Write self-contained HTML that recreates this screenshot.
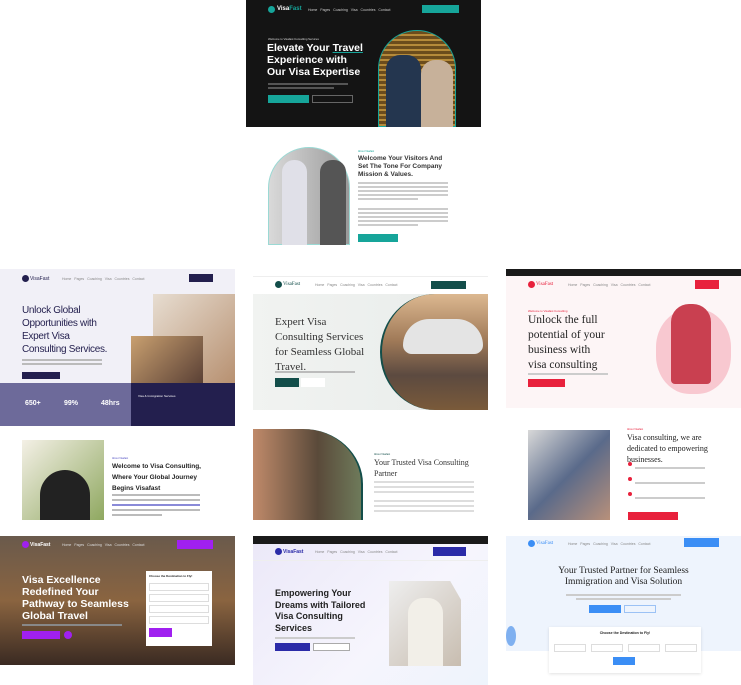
<!DOCTYPE html>
<html><head><meta charset="utf-8"><style>
*{margin:0;padding:0;box-sizing:border-box}
body{width:741px;height:685px;background:#fff;position:relative;overflow:hidden;font-family:"Liberation Sans",sans-serif}
.a{position:absolute}
.t{position:absolute;white-space:nowrap}
.serif{font-family:"Liberation Serif",serif}
.ln{position:absolute;height:1.5px;background:#bbb}
.nav{position:absolute;font-size:3.5px;color:#888;white-space:nowrap}
</style></head><body>

<!-- TOP DARK HERO -->
<div class="a" style="left:246px;top:0;width:235px;height:127px;background:#141414">
  <div class="a" style="left:22px;top:6px;width:7px;height:7px;border-radius:50%;background:#16a59a"></div>
  <div class="a" style="left:31px;top:6px;font-size:6px;font-weight:bold;color:#fff">Visa<span style="color:#16a59a">Fast</span></div>
  <div class="nav" style="left:62px;top:8px;color:#ccc">Home &nbsp; Pages &nbsp; Coaching &nbsp; Visa &nbsp; Countries &nbsp; Contact</div>
  <div class="a" style="left:176px;top:5px;width:37px;height:8px;background:#16a59a"></div>
  <div class="t" style="left:22px;top:37px;font-size:2.8px;color:#ddd">Welcome to Visafast Consulting Services</div>
  <div class="t" style="left:21px;top:42px;font-size:10.5px;font-weight:bold;color:#fff;line-height:12px">Elevate Your <u style="text-decoration-color:#16a59a">Travel</u><br>Experience with<br>Our Visa Expertise</div>
  <div class="ln" style="left:22px;top:83px;width:80px;background:#555"></div>
  <div class="ln" style="left:22px;top:87px;width:66px;background:#555"></div>
  <div class="a" style="left:22px;top:95px;width:41px;height:8px;background:#16a59a"></div>
  <div class="a" style="left:66px;top:95px;width:41px;height:8px;border:1px solid #666"></div>
  <div class="a" style="left:132px;top:30px;width:78px;height:97px;border-radius:39px 39px 0 0;border:1.5px solid #16a59a;background:repeating-linear-gradient(#6b4c1c 0 3px,#b58a3a 3px 5px)"></div>
  <div class="a" style="left:140px;top:55px;width:35px;height:72px;border-radius:14px 14px 0 0;background:#24364f"></div>
  <div class="a" style="left:175px;top:60px;width:32px;height:67px;border-radius:14px 14px 0 0;background:#c7b19a"></div>
</div>

<!-- ABOUT BLOCK -->
<div class="a" style="left:268px;top:147px;width:82px;height:98px;border-radius:41px 41px 0 0;border:1px solid #9bd9d4;background:linear-gradient(90deg,#d9d9d9,#9a9a9a)"></div>
<div class="a" style="left:282px;top:160px;width:25px;height:85px;border-radius:12px 12px 0 0;background:#e0e0e8"></div>
<div class="a" style="left:320px;top:160px;width:26px;height:85px;border-radius:12px 12px 0 0;background:#555"></div>
<div class="t" style="left:358px;top:150px;font-size:2.5px;color:#16a59a">About Visafast</div>
<div class="t" style="left:358px;top:155px;font-size:6.5px;font-weight:bold;color:#333;line-height:8px">Welcome Your Visitors And<br>Set The Tone For Company<br>Mission &amp; Values.</div>
<div class="ln" style="left:358px;top:182px;width:90px;background:#ccc"></div>
<div class="ln" style="left:358px;top:186px;width:90px;background:#ccc"></div>
<div class="ln" style="left:358px;top:190px;width:90px;background:#ccc"></div>
<div class="ln" style="left:358px;top:194px;width:90px;background:#ccc"></div>
<div class="ln" style="left:358px;top:198px;width:60px;background:#ccc"></div>
<div class="ln" style="left:358px;top:208px;width:90px;background:#ccc"></div>
<div class="ln" style="left:358px;top:212px;width:90px;background:#ccc"></div>
<div class="ln" style="left:358px;top:216px;width:90px;background:#ccc"></div>
<div class="ln" style="left:358px;top:220px;width:90px;background:#ccc"></div>
<div class="ln" style="left:358px;top:224px;width:60px;background:#ccc"></div>
<div class="a" style="left:358px;top:234px;width:40px;height:8px;background:#16a59a"></div>

<!-- ROW3 CARD1 -->
<div class="a" style="left:0;top:269px;width:235px;height:157px;background:#f1f0f7">
  <div class="a" style="left:22px;top:6px;width:7px;height:7px;border-radius:50%;background:#231f4e"></div>
  <div class="t" style="left:30px;top:7px;font-size:5px;color:#231f4e">VisaFast</div>
  <div class="nav" style="left:62px;top:8px">Home &nbsp; Pages &nbsp; Coaching &nbsp; Visa &nbsp; Countries &nbsp; Contact</div>
  <div class="a" style="left:189px;top:5px;width:24px;height:8px;background:#231f4e"></div>
  <div class="t" style="left:22px;top:35px;font-size:10px;color:#231f4e;line-height:13px;letter-spacing:-0.3px">Unlock Global<br>Opportunities with<br>Expert Visa<br>Consulting Services.</div>
  <div class="ln" style="left:22px;top:90px;width:80px;background:#bbb"></div>
  <div class="ln" style="left:22px;top:94px;width:80px;background:#bbb"></div>
  <div class="a" style="left:22px;top:103px;width:38px;height:7px;background:#231f4e"></div>
  <div class="a" style="left:153px;top:25px;width:82px;height:90px;background:linear-gradient(135deg,#e7ddd1,#b79070)"></div>
  <div class="a" style="left:131px;top:67px;width:72px;height:47px;background:linear-gradient(135deg,#c9a070,#5a4035)"></div>
  <div class="a" style="left:0;top:114px;width:131px;height:43px;background:#6d6a9a"></div>
  <div class="a" style="left:131px;top:114px;width:104px;height:43px;background:#231f4e"></div>
  <div class="t" style="left:25px;top:131px;font-size:7px;color:#fff;font-weight:bold">650+</div>
  <div class="t" style="left:64px;top:131px;font-size:7px;color:#fff;font-weight:bold">99%</div>
  <div class="t" style="left:101px;top:131px;font-size:7px;color:#fff;font-weight:bold">48hrs</div>
  <div class="t" style="left:138px;top:125px;font-size:3px;color:#fff">Visa &amp; Immigration Services</div>
</div>

<!-- ROW3 CARD2 -->
<div class="a" style="left:253px;top:269px;width:235px;height:141px;background:#fff">
  <div class="a" style="left:0;top:0;width:235px;height:8px;background:#fff;border-bottom:1px solid #eee"></div>
  <div class="a" style="left:22px;top:12px;width:7px;height:7px;border-radius:50%;background:#134e4a"></div>
  <div class="t serif" style="left:30px;top:13px;font-size:5px;color:#134e4a">VisaFast</div>
  <div class="nav" style="left:62px;top:14px">Home &nbsp; Pages &nbsp; Coaching &nbsp; Visa &nbsp; Countries &nbsp; Contact</div>
  <div class="a" style="left:178px;top:12px;width:35px;height:8px;background:#134e4a"></div>
  <div class="a" style="left:0;top:25px;width:235px;height:116px;background:linear-gradient(90deg,#f1f3f1,#e8ecea)"></div>
  <div class="t serif" style="left:22px;top:46px;font-size:11px;color:#333;line-height:15px">Expert Visa<br>Consulting Services<br>for Seamless Global<br>Travel.</div>
  <div class="ln" style="left:22px;top:102px;width:80px"></div>
  <div class="a" style="left:22px;top:109px;width:24px;height:9px;background:#134e4a"></div>
  <div class="a" style="left:48px;top:109px;width:24px;height:9px;background:#fff"></div>
  <div class="a" style="left:127px;top:25px;width:108px;height:116px;border-radius:55px 0 0 55px/58px 0 0 58px;border-left:2px solid #134e4a;background:linear-gradient(180deg,#dcb890 0%,#a07a58 40%,#5c4a40 70%,#7a5a3a 100%)"></div>
  <div class="a" style="left:150px;top:50px;width:80px;height:35px;border-radius:30px 30px 10px 10px;background:#e4e4e4"></div>
</div>

<!-- ROW3 CARD3 -->
<div class="a" style="left:506px;top:269px;width:235px;height:139px;background:#fdf5f6">
  <div class="a" style="left:0;top:0;width:235px;height:7px;background:#1a1a1a"></div>
  <div class="a" style="left:22px;top:12px;width:7px;height:7px;border-radius:50%;background:#e8213c"></div>
  <div class="t serif" style="left:30px;top:13px;font-size:5px;color:#e8213c">VisaFast</div>
  <div class="nav" style="left:62px;top:14px">Home &nbsp; Pages &nbsp; Coaching &nbsp; Visa &nbsp; Countries &nbsp; Contact</div>
  <div class="a" style="left:189px;top:11px;width:24px;height:9px;background:#e8213c"></div>
  <div class="t" style="left:22px;top:40px;font-size:2.8px;color:#e8213c">Welcome to Visafast Consulting</div>
  <div class="t serif" style="left:22px;top:44px;font-size:11.5px;color:#222;line-height:15px">Unlock the full<br>potential of your<br>business with<br>visa consulting</div>
  <div class="ln" style="left:22px;top:104px;width:80px;background:#ccc"></div>
  <div class="a" style="left:22px;top:110px;width:37px;height:8px;background:#e8213c"></div>
  <div class="a" style="left:150px;top:40px;width:75px;height:85px;border-radius:45%;background:#f8c8d0"></div>
  <div class="a" style="left:165px;top:35px;width:40px;height:80px;border-radius:18px 18px 4px 4px;background:#c94050"></div>
</div>

<!-- ROW4 -->
<div class="a" style="left:22px;top:440px;width:82px;height:80px;background:linear-gradient(135deg,#f4f0e6,#8fa860)"></div>
<div class="a" style="left:40px;top:470px;width:50px;height:50px;border-radius:25px 25px 0 0;background:#222"></div>
<div class="t" style="left:112px;top:457px;font-size:2.5px;color:#4c4ac0">About Visafast</div>
<div class="t" style="left:112px;top:461px;font-size:6.5px;font-weight:bold;color:#222;line-height:11px">Welcome to Visa Consulting,<br>Where Your Global Journey<br>Begins Visafast</div>
<div class="ln" style="left:112px;top:494px;width:88px"></div>
<div class="ln" style="left:112px;top:499px;width:88px"></div>
<div class="ln" style="left:112px;top:504px;width:88px;background:#8a8ad8"></div>
<div class="ln" style="left:112px;top:509px;width:88px"></div>
<div class="ln" style="left:112px;top:514px;width:50px"></div>

<div class="a" style="left:253px;top:429px;width:110px;height:91px;border-radius:0 60px 0 0 / 0 55px 0 0;border-right:2px solid #134e4a;background:linear-gradient(90deg,#c08a6a,#5a4a3a 60%,#6e7a5a)"></div>
<div class="t" style="left:374px;top:453px;font-size:2.5px;color:#134e4a">About Visafast</div>
<div class="t serif" style="left:374px;top:457px;font-size:8px;color:#333;line-height:11px">Your Trusted Visa Consulting<br>Partner</div>
<div class="ln" style="left:374px;top:481px;width:100px;background:#ddd"></div>
<div class="ln" style="left:374px;top:486px;width:100px;background:#ddd"></div>
<div class="ln" style="left:374px;top:491px;width:100px;background:#ddd"></div>
<div class="ln" style="left:374px;top:500px;width:100px;background:#ddd"></div>
<div class="ln" style="left:374px;top:505px;width:100px;background:#ddd"></div>
<div class="ln" style="left:374px;top:510px;width:100px;background:#ddd"></div>

<div class="a" style="left:528px;top:430px;width:82px;height:90px;background:linear-gradient(135deg,#d8d8d8,#5a6a8a 50%,#b8907a)"></div>
<div class="t" style="left:627px;top:428px;font-size:2.5px;color:#e8213c">About Visafast</div>
<div class="t serif" style="left:627px;top:432px;font-size:8px;color:#222;line-height:11px">Visa consulting, we are<br>dedicated to empowering<br>businesses.</div>
<div class="a" style="left:628px;top:462px;width:4px;height:4px;border-radius:50%;background:#e8213c"></div>
<div class="a" style="left:628px;top:477px;width:4px;height:4px;border-radius:50%;background:#e8213c"></div>
<div class="a" style="left:628px;top:492px;width:4px;height:4px;border-radius:50%;background:#e8213c"></div>
<div class="ln" style="left:635px;top:467px;width:70px;background:#ccc"></div>
<div class="ln" style="left:635px;top:482px;width:70px;background:#ccc"></div>
<div class="ln" style="left:635px;top:497px;width:70px;background:#ccc"></div>
<div class="a" style="left:628px;top:512px;width:50px;height:8px;background:#e8213c"></div>

<!-- ROW5 CARD1 -->
<div class="a" style="left:0;top:536px;width:235px;height:129px;background:linear-gradient(180deg,#6a5a4c,#8a6440 50%,#3a2a22)">
  <div class="a" style="left:22px;top:5px;width:7px;height:7px;border-radius:50%;background:#a020f0"></div>
  <div class="t" style="left:30px;top:6px;font-size:5px;color:#fff;font-weight:bold">VisaFast</div>
  <div class="nav" style="left:62px;top:7px;color:#ddd">Home &nbsp; Pages &nbsp; Coaching &nbsp; Visa &nbsp; Countries &nbsp; Contact</div>
  <div class="a" style="left:177px;top:4px;width:36px;height:9px;background:#a020f0"></div>
  <div class="t" style="left:22px;top:38px;font-size:10.5px;color:#fff;font-weight:bold;line-height:12px">Visa Excellence<br>Redefined Your<br>Pathway to Seamless<br>Global Travel</div>
  <div class="ln" style="left:22px;top:88px;width:100px;background:#888"></div>
  <div class="a" style="left:22px;top:95px;width:38px;height:8px;background:#a020f0"></div>
  <div class="a" style="left:64px;top:95px;width:8px;height:8px;border-radius:50%;background:#a020f0"></div>
  <div class="a" style="left:146px;top:35px;width:66px;height:75px;background:#fff"></div>
  <div class="t" style="left:149px;top:38px;font-size:3px;font-weight:bold;color:#222">Choose the Destination to Fly!</div>
  <div class="a" style="left:149px;top:47px;width:60px;height:8px;border:1px solid #ddd"></div>
  <div class="a" style="left:149px;top:58px;width:60px;height:8px;border:1px solid #ddd"></div>
  <div class="a" style="left:149px;top:69px;width:60px;height:8px;border:1px solid #ddd"></div>
  <div class="a" style="left:149px;top:80px;width:60px;height:8px;border:1px solid #ddd"></div>
  <div class="a" style="left:149px;top:92px;width:23px;height:9px;background:#a020f0"></div>
</div>

<!-- ROW5 CARD2 -->
<div class="a" style="left:253px;top:536px;width:235px;height:149px;background:linear-gradient(135deg,#ebe8f8,#f6f5fd 60%,#eef4fc)">
  <div class="a" style="left:0;top:0;width:235px;height:8px;background:#1a1a1a"></div>
  <div class="a" style="left:22px;top:12px;width:7px;height:7px;border-radius:50%;background:#2b2ba8"></div>
  <div class="t" style="left:30px;top:13px;font-size:5px;color:#2b2ba8;font-weight:bold">VisaFast</div>
  <div class="nav" style="left:62px;top:14px">Home &nbsp; Pages &nbsp; Coaching &nbsp; Visa &nbsp; Countries &nbsp; Contact</div>
  <div class="a" style="left:180px;top:11px;width:33px;height:9px;background:#2b2ba8"></div>
  <div class="a" style="left:0;top:24px;width:235px;height:1px;background:#eee"></div>
  <div class="t" style="left:22px;top:52px;font-size:9px;font-weight:bold;color:#222;line-height:11.5px">Empowering Your<br>Dreams with Tailored<br>Visa Consulting<br>Services</div>
  <div class="ln" style="left:22px;top:101px;width:80px;background:#ccc"></div>
  <div class="a" style="left:22px;top:107px;width:35px;height:8px;background:#2b2ba8"></div>
  <div class="a" style="left:60px;top:107px;width:37px;height:8px;border:1px solid #aaa;background:#fff"></div>
  <div class="a" style="left:136px;top:45px;width:72px;height:85px;background:linear-gradient(135deg,#eee,#c8bdb0);clip-path:polygon(0 0,85% 0,100% 22%,100% 100%,0 100%)"></div>
  <div class="a" style="left:155px;top:62px;width:35px;height:68px;border-radius:15px 15px 0 0;background:#f2efe8"></div>
</div>

<!-- ROW5 CARD3 -->
<div class="a" style="left:506px;top:536px;width:235px;height:115px;background:#eef4fd">
  <div class="a" style="left:22px;top:4px;width:7px;height:7px;border-radius:50%;background:#3b8ef5"></div>
  <div class="t serif" style="left:30px;top:5px;font-size:5px;color:#3b8ef5">VisaFast</div>
  <div class="nav" style="left:62px;top:6px">Home &nbsp; Pages &nbsp; Coaching &nbsp; Visa &nbsp; Countries &nbsp; Contact</div>
  <div class="a" style="left:178px;top:2px;width:35px;height:9px;background:#3b8ef5"></div>
  <div class="a serif" style="left:0;top:30px;width:235px;text-align:center;font-size:9.5px;color:#222;line-height:11px;white-space:nowrap">Your Trusted Partner for Seamless<br>Immigration and Visa Solution</div>
  <div class="ln" style="left:60px;top:58px;width:115px;background:#ccc"></div>
  <div class="ln" style="left:70px;top:62px;width:95px;background:#ccc"></div>
  <div class="a" style="left:83px;top:69px;width:32px;height:8px;background:#3b8ef5"></div>
  <div class="a" style="left:118px;top:69px;width:32px;height:8px;border:1px solid #9cc2f5"></div>
  <div class="a" style="left:0;top:90px;width:10px;height:20px;border-radius:50%;background:#7fb0f0"></div>
  <div class="a" style="left:43px;top:91px;width:152px;height:46px;background:#fff;box-shadow:0 1px 3px rgba(0,0,0,.12)">
    <div class="a" style="left:0;top:4px;width:152px;text-align:center;font-size:3.5px;font-weight:bold;color:#222">Choose the Destination to Fly!</div>
    <div class="a" style="left:5px;top:17px;width:32px;height:8px;border:1px solid #ddd"></div>
    <div class="a" style="left:42px;top:17px;width:32px;height:8px;border:1px solid #ddd"></div>
    <div class="a" style="left:79px;top:17px;width:32px;height:8px;border:1px solid #ddd"></div>
    <div class="a" style="left:116px;top:17px;width:32px;height:8px;border:1px solid #ddd"></div>
    <div class="a" style="left:64px;top:30px;width:22px;height:8px;background:#3b8ef5"></div>
  </div>
</div>

</body></html>
